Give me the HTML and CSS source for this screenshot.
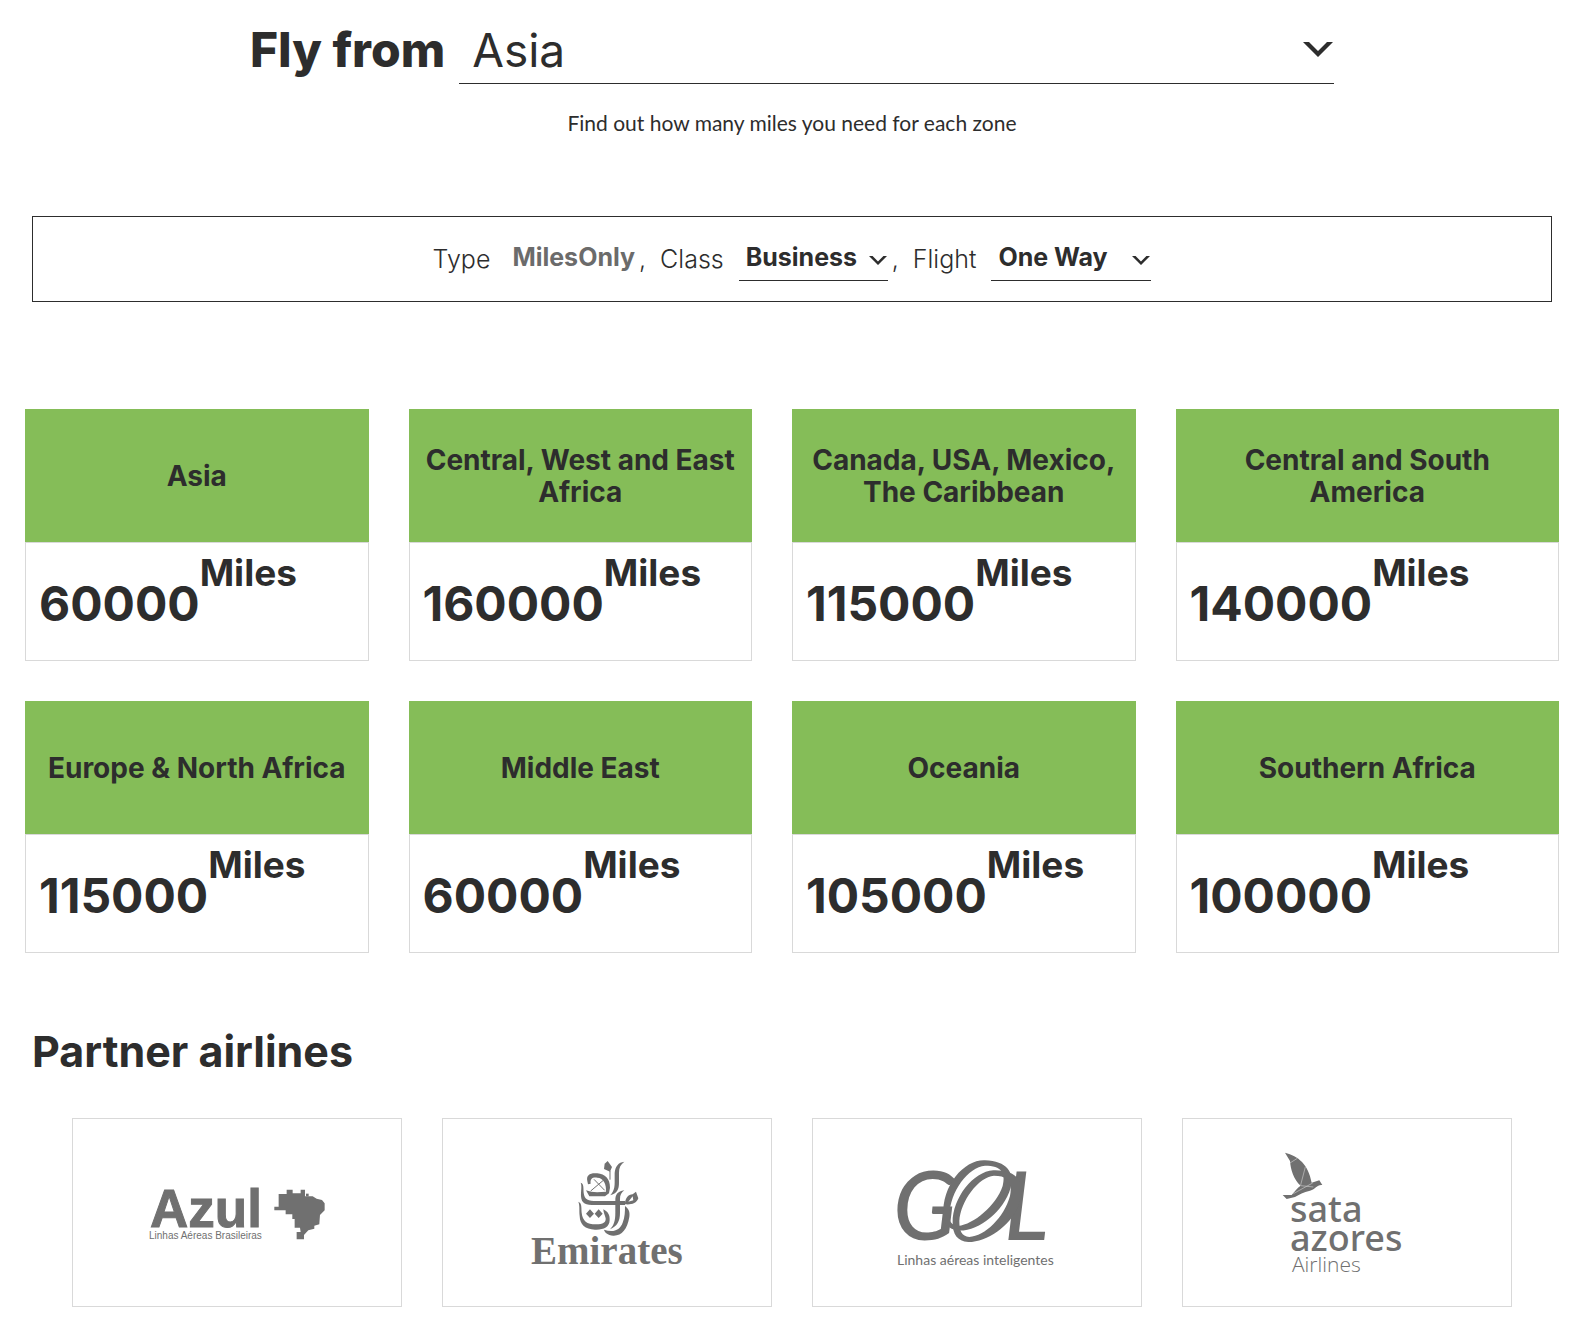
FILE: index.html
```html
<!DOCTYPE html>
<html lang="en">
<head>
    <meta charset="utf-8">
    <meta name="viewport" content="width=device-width, initial-scale=1">
    <title>Miles by zone</title>
    <link rel="stylesheet" href="styles.css">
</head>
<body>
    <header class="origin">
        <div class="origin-row">
            <label class="origin-label" for="origin">Fly from</label>
            <select class="origin-select" id="origin">
                <option>Asia</option>
                <option>Europe &amp; North Africa</option>
                <option>Middle East</option>
                <option>Oceania</option>
            </select>
        </div>
        <p class="origin-hint">Find out how many miles you need for each zone</p>
    </header>

    <form class="filters">
        <span class="filter-label">Type</span>
        <span class="filter-fixed">MilesOnly</span>
        <span class="comma">,</span>
        <label class="filter-label" for="class">Class</label>
        <select class="filter-select filter-class" id="class">
            <option>Business</option>
            <option>Economy</option>
        </select>
        <span class="comma">,</span>
        <label class="filter-label" for="flight">Flight</label>
        <select class="filter-select filter-flight" id="flight">
            <option>One Way</option>
            <option>Return</option>
        </select>
    </form>

    <main>
        <section class="zones">
            <article class="zone">
                <h2 class="zone-name">Asia</h2>
                <p class="zone-miles">60000<span class="unit">Miles</span></p>
            </article>
            <article class="zone">
                <h2 class="zone-name">Central, West and East Africa</h2>
                <p class="zone-miles">160000<span class="unit">Miles</span></p>
            </article>
            <article class="zone">
                <h2 class="zone-name">Canada, USA, Mexico, The Caribbean</h2>
                <p class="zone-miles">115000<span class="unit">Miles</span></p>
            </article>
            <article class="zone">
                <h2 class="zone-name">Central and South America</h2>
                <p class="zone-miles">140000<span class="unit">Miles</span></p>
            </article>
            <article class="zone">
                <h2 class="zone-name">Europe &amp; North Africa</h2>
                <p class="zone-miles">115000<span class="unit">Miles</span></p>
            </article>
            <article class="zone">
                <h2 class="zone-name">Middle East</h2>
                <p class="zone-miles">60000<span class="unit">Miles</span></p>
            </article>
            <article class="zone">
                <h2 class="zone-name">Oceania</h2>
                <p class="zone-miles">105000<span class="unit">Miles</span></p>
            </article>
            <article class="zone">
                <h2 class="zone-name">Southern Africa</h2>
                <p class="zone-miles">100000<span class="unit">Miles</span></p>
            </article>
        </section>

        <section class="partners">
            <h2 class="partners-title">Partner airlines</h2>
            <div class="partner-list">
                <div class="partner">
                    <svg class="logo" width="220" height="140" viewBox="127 1142 220 140">
                        <text class="azul-name" x="150" y="1226">Azul</text>
                        <text class="azul-tag" x="149" y="1238">Linhas Aéreas Brasileiras</text>
                        <g transform="translate(130 1160) scale(.3333)">
                            <path d="M433 137H446V99H470V86H488V97H512V86H525V106H548L560 113L576 117L584 127V148L570 162L568 190L553 194V203L535 208L522 222V235H500V213H512L510 200H494V174H487V160H467V148H433z"/>
                            <path d="M528 98h8v8h-8z"/>
                        </g>
                    </svg>
                </div>
                <div class="partner">
                    <svg class="logo" width="200" height="140" viewBox="507 1142 200 140">
                        <g transform="translate(510 1140) scale(.3333)">
                            <path d="M293 60L306 78L300 92L282 84L284 68z"/>
                            <path d="M343 62C325 64 316 76 314 96L314 125C314 145 308 155 300 163C322 156 327 145 327 125L327 95C327 80 332 70 343 62z"/>
                            <path d="M232 120C228 102 240 95 262 97C285 100 300 112 300 140L297 157L285 166H238L228 148C245 155 265 154 288 152C290 130 280 110 262 110C248 108 240 112 242 128L234 130z"/>
                            <path class="hairline" d="M300 90V116M280 118L242 150M252 115L284 148"/>
                            <path d="M212 125C222 128 220 140 221 155C223 176 235 180 260 180H345V192H255C228 192 214 188 213 165C213 145 216 135 212 125z"/>
                            <path d="M343 148C322 152 316 160 316 180V215C316 240 312 252 300 265C322 255 330 240 330 215V175C330 162 334 155 343 148z"/>
                            <path d="M205 182C216 186 214 200 215 215C218 240 230 250 258 250C280 250 288 245 287 232C285 222 280 215 280 205C294 212 300 222 299 238C298 260 280 267 255 266C225 264 210 252 209 225C207 205 210 195 205 182z"/>
                            <path d="M240 205l12 13-12 13-12-13zM266 205l12 13-12 13-12-13z"/>
                            <path fill-rule="evenodd" d="M378 152L385 172C380 188 362 192 345 190C345 172 355 160 368 160zM368 166L355 182L370 178z"/>
                            <path d="M345 195C358 205 360 215 358 228C352 265 335 285 310 284C292 282 284 275 282 266C310 275 330 268 338 245C345 228 345 212 345 195z"/>
                        </g>
                        <text class="emirates-name" x="531" y="1263">Emirates</text>
                    </svg>
                </div>
                <div class="partner">
                    <svg class="logo" width="210" height="140" viewBox="872 1142 210 140">
                        <text class="gol-name" x="893" y="1239">G</text>
                        <text class="gol-name" x="1004" y="1239">L</text>
                        <g transform="translate(870 1140) scale(.3333)" fill-rule="evenodd">
                            <path d="M220 225C215 130 285 55 345 58C410 60 435 95 422 140C400 215 320 275 260 268C235 262 222 250 220 225zM238 225C240 150 295 78 345 74C395 74 408 95 398 135C378 195 310 250 265 255C245 252 238 242 238 225z"/>
                            <path d="M248 245C248 170 310 92 370 88C425 86 460 110 455 160C445 235 365 302 295 303C262 300 248 280 248 245zM268 240C272 180 325 108 372 104C415 104 428 125 420 165C402 230 345 285 298 288C275 285 268 270 268 240z"/>
                        </g>
                        <text class="gol-tag" x="897" y="1264">Linhas aéreas inteligentes</text>
                    </svg>
                </div>
                <div class="partner">
                    <svg class="logo" width="180" height="160" viewBox="1257 1132 180 160">
                        <g transform="translate(1260 1130) scale(.3333)">
                            <path d="M75 65C115 75 145 100 155 155L178 148L187 162C170 160 168 174 150 179C130 184 118 190 105 198L80 204L68 192H95C105 180 112 170 122 164C100 145 92 115 90 90z"/>
                            <path class="seam" d="M90 96L112 82M122 162L136 108M100 188L158 156M122 164L160 168"/>
                        </g>
                        <text class="sata-name" x="1290" y="1221">sata</text>
                        <text class="sata-name" x="1290" y="1250">azores</text>
                        <text class="sata-tag" x="1292" y="1271">Airlines</text>
                    </svg>
                </div>
            </div>
        </section>
    </main>
</body>
</html>
```

FILE: styles.css
```css
:root {
    --ink: #2d2d2d;
    --muted: #6b6b6b;
    --green: #85bd58;
    --line: #d9d9d9;
    --logo: #707070;
}

* {
    box-sizing: border-box;
}

body {
    margin: 0;
    color: var(--ink);
    background: #fff;
    font-family: Inter, "Open Sans", sans-serif;
}

h2, p {
    margin: 0;
}

select {
    appearance: none;
    margin: 0;
    border: 0;
    border-bottom: 1px solid var(--ink);
    border-radius: 0;
    color: inherit;
    font-family: inherit;
    background-color: transparent;
    background-image: url("data:image/svg+xml,%3Csvg xmlns='http://www.w3.org/2000/svg' viewBox='0 0 30 15'%3E%3Cpath d='M0 0h6l9 9 9-9h6L15 15z' fill='%232d2d2d'/%3E%3C/svg%3E");
    background-repeat: no-repeat;
    cursor: pointer;
}

/* Origin */
.origin {
    padding: 16px 254px 0 250px;
}

.origin-row {
    display: flex;
    align-items: center;
    gap: 14px;
}

.origin-label {
    font-size: 48px;
    font-weight: 800;
    line-height: 68px;
    white-space: nowrap;
}

.origin-select {
    flex: 1;
    min-width: 0;
    height: 68px;
    padding: 0 48px 0 13px;
    font-size: 46px;
    font-weight: 400;
    background-size: 30px 15px;
    background-position: right 1px top 26px;
}

.origin-hint {
    margin-top: 23px;
    font-family: Lato, sans-serif;
    font-size: 21px;
    line-height: 32px;
    text-align: center;
}

/* Filters */
.filters {
    display: flex;
    align-items: center;
    justify-content: center;
    margin: 77px 36px 0 32px;
    padding: 18px;
    border: 1px solid var(--ink);
    font-size: 25px;
    line-height: 44px;
}

.filter-label {
    font-weight: 300;
}

.filter-fixed {
    margin: 0 4px 4px 22px;
    color: var(--muted);
    font-weight: 700;
}

.comma {
    margin-right: 14px;
    font-weight: 300;
}

.filter-select {
    height: 44px;
    margin-left: 15px;
    padding: 0 30px 4px 7px;
    font-size: 25px;
    font-weight: 700;
    background-size: 18px 9px;
    background-position: right 1px top 19px;
}

.filter-class {
    width: 149px;
    margin-right: 4px;
}

.filter-flight {
    width: 160px;
}

/* Zones */
.zones {
    display: grid;
    grid-template-columns: repeat(4, 1fr);
    row-gap: 40px;
    margin: 107px 29px 0 25px;
}

.zone {
    display: flex;
    flex-direction: column;
    margin-right: 40px;
}

.zone:nth-child(4n) {
    margin-right: 0;
}

.zone-name {
    display: flex;
    align-items: center;
    justify-content: center;
    min-height: 133px;
    padding: 0 14px;
    background: var(--green);
    font-size: 28px;
    font-weight: 700;
    line-height: 32px;
    text-align: center;
}

.zone-miles {
    flex: 1;
    min-height: 119px;
    padding: 12px 13px;
    border: 1px solid var(--line);
    font-size: 48px;
    font-weight: 700;
    line-height: 60px;
    white-space: nowrap;
}

.unit {
    font-size: 37px;
    line-height: 36px;
    vertical-align: 35px;
}

/* Partners */
.partners {
    padding: 72px 36px 27px 32px;
}

.partners-title {
    font-size: 43px;
    font-weight: 700;
    line-height: 52px;
}

.partner-list {
    display: grid;
    grid-template-columns: repeat(4, 1fr);
    gap: 40px;
    margin: 41px 40px 0;
}

.partner {
    display: flex;
    align-items: center;
    justify-content: center;
    height: 189px;
    border: 1px solid var(--line);
}

.logo {
    fill: var(--logo);
}

.hairline {
    fill: none;
    stroke: var(--logo);
    stroke-width: 3;
}

.seam {
    fill: none;
    stroke: #c8c8c8;
    stroke-width: 2;
}

.azul-name {
    font: 700 53px "Liberation Sans", sans-serif;
    stroke: var(--logo);
    stroke-width: 1;
}

.azul-tag {
    font: 10px "Liberation Sans", sans-serif;
}

.emirates-name {
    font: 700 39px "Liberation Serif", serif;
}

.gol-name {
    font: italic 500 94px Lato, sans-serif;
}

.gol-tag {
    font: 14px Lato, sans-serif;
}

.sata-name {
    font: 500 36px "Noto Sans", sans-serif;
}

.sata-tag {
    font: 300 21px "Open Sans", sans-serif;
}
```
